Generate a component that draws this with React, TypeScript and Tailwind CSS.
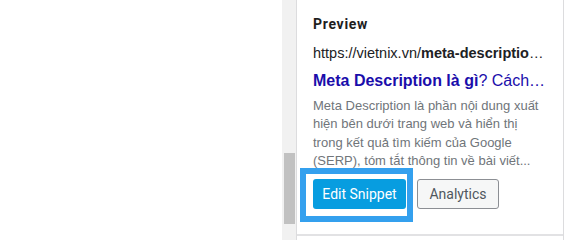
import React from "react";

function Scrollbar() {
    return (
        <div className="relative w-[14px] h-full bg-[#f1f1f1]">
            <div className="absolute left-[2px] top-[153px] w-[11px] h-[71px] bg-[#c1c1c1]" />
        </div>
    );
}

function PreviewPanel() {
    return (
        <div className="flex flex-col w-[268px] h-full border-x border-[#dcdcde] bg-white">
            <div className="flex flex-col h-[236px] px-4 pt-[16px] border-b-2 border-[#e2e2e4]">
                <div className="font-['Roboto',sans-serif] font-bold text-[14px] leading-4 tracking-[0.7px] text-[#1e1e1e]">Preview</div>

                <div className="mt-[13px] font-['Liberation_Sans',Arial,sans-serif] text-[14.5px] leading-4 text-[#202124] truncate">
                    https://vietnix.vn/<b>meta-description-la-gi/</b>
                </div>
                <div className="mt-[10px] font-['Liberation_Sans',Arial,sans-serif] text-[16px] leading-5 text-[#1a0dab] truncate">
                    <b>Meta Description là gì</b>? Cách tối ưu Meta Description
                </div>
                <p className="mt-[6px] font-['Liberation_Sans',Arial,sans-serif] text-[13px] leading-[18.3px] text-[#70757a]">
                    Meta Description là phần nội dung xuất hiện bên dưới trang web và hiển thị trong kết quả tìm kiếm của Google (SERP), tóm tắt thông tin về bài viết...
                </p>

                <div className="flex items-center gap-[11px] mt-[9px] font-['Roboto',sans-serif]">
                    <div className="relative">
                        <span className="absolute -left-[13px] -top-[11px] -right-[7px] -bottom-[13px] border-[6px] border-[#34a0ee]" />
                        <button className="relative h-[30px] w-[93px] rounded-[3px] bg-[#079de0] text-[14px] text-white">Edit Snippet</button>
                    </div>
                    <button className="h-[30px] w-[82px] rounded-[3px] border border-[#8c8f94] bg-[#f6f7f7] text-[14px] text-[#50575e]">Analytics</button>
                </div>
            </div>
        </div>
    );
}

export default function App() {
    return (
        <div className="flex w-[565px] h-[240px] bg-white overflow-hidden">
            <div className="w-[282px] h-full bg-white" />
            <Scrollbar />
            <PreviewPanel />
        </div>
    );
}
